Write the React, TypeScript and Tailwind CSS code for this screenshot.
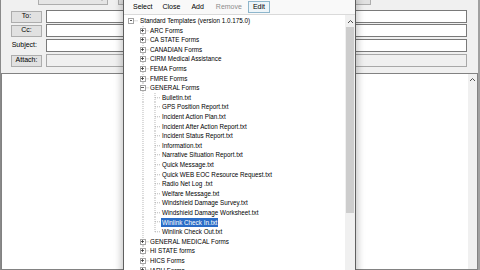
import React from "react";

type Row = {
  level: 0 | 1 | 2;
  text: string;
  box?: "plus" | "minus";
  last?: boolean;
  selected?: boolean;
};

const level1 = (text: string, box: "plus" | "minus" = "plus"): Row => ({ level: 1, text, box });
const leaf = (text: string, extra: Partial<Row> = {}): Row => ({ level: 2, text, ...extra });

const rows: Row[] = [
  { level: 0, text: "Standard Templates (version 1.0.175.0)", box: "minus" },
  level1("ARC Forms"),
  level1("CA STATE Forms"),
  level1("CANADIAN Forms"),
  level1("CIRM Medical Assistance"),
  level1("FEMA Forms"),
  level1("FMRE Forms"),
  level1("GENERAL Forms", "minus"),
  leaf("Bulletin.txt"),
  leaf("GPS Position Report.txt"),
  leaf("Incident Action Plan.txt"),
  leaf("Incident After Action Report.txt"),
  leaf("Incident Status Report.txt"),
  leaf("Information.txt"),
  leaf("Narrative Situation Report.txt"),
  leaf("Quick Message.txt"),
  leaf("Quick WEB EOC Resource Request.txt"),
  leaf("Radio Net Log .txt"),
  leaf("Welfare Message.txt"),
  leaf("Windshield Damage Survey.txt"),
  leaf("Windshield Damage Worksheet.txt"),
  leaf("Winlink Check In.txt", { selected: true }),
  leaf("Winlink Check Out.txt", { last: true }),
  level1("GENERAL MEDICAL Forms"),
  level1("HI STATE forms"),
  level1("HICS Forms"),
  level1("IARU Forms"),
];

const LINE = "#a3a3a3";

function ExpandBox({ cx, kind }: { cx: number; kind: "plus" | "minus" }) {
  return (
    <g shapeRendering="crispEdges">
      <rect x={cx - 2.5} y={2.3} width={5} height={5} fill="#fff" stroke="#8f8f8f" strokeWidth={0.8} />
      <line x1={cx - 1.5} y1={4.8} x2={cx + 1.5} y2={4.8} stroke="#333" strokeWidth={0.8} />
      {kind === "plus" ? <line x1={cx} y1={3.3} x2={cx} y2={6.3} stroke="#333" strokeWidth={0.8} /> : null}
    </g>
  );
}

function TreeLines({ row }: { row: Row }) {
  const width = row.level === 0 ? 15 : row.level === 1 ? 25 : 37;
  return (
    <svg width={width} height={9.6} viewBox={`0 0 ${width} 9.6`} className="shrink-0">
      <g stroke={LINE} strokeWidth={0.8} strokeDasharray="1 1">
        {row.level === 0 ? <line x1={9.5} y1={4.8} x2={14} y2={4.8} /> : null}
        {row.level >= 1 ? <line x1={19} y1={0} x2={19} y2={9.6} /> : null}
        {row.level === 1 ? <line x1={21.5} y1={4.8} x2={25} y2={4.8} /> : null}
        {row.level === 2 ? <line x1={31} y1={0} x2={31} y2={row.last ? 4.8 : 9.6} /> : null}
        {row.level === 2 ? <line x1={31} y1={4.8} x2={37} y2={4.8} /> : null}
      </g>
      {row.box ? <ExpandBox cx={row.level === 0 ? 7 : 19} kind={row.box} /> : null}
    </svg>
  );
}

function TreeRow({ row }: { row: Row }) {
  return (
    <div className="flex h-[9.6px] items-center">
      <TreeLines row={row} />
      <span
        className={`whitespace-nowrap px-[1px] text-[6.3px] leading-[9.4px] ${
          row.selected ? "bg-[#2a6cc6] text-white" : "text-black"
        }`}
      >
        {row.text}
      </span>
    </div>
  );
}

function UpArrow({ className }: { className?: string }) {
  return (
    <svg width="7" height="5" viewBox="0 0 7 5" className={className}>
      <path d="M1 4 L3.5 1.5 L6 4" fill="none" stroke="#505050" strokeWidth="1" />
    </svg>
  );
}

function FieldRow({ label, button = true, disabled = false, className = "" }: { label: string; button?: boolean; disabled?: boolean; className?: string }) {
  return (
    <div className={`flex h-[13px] items-center ${className}`}>
      {button ? (
        <div className="ml-[10px] flex h-[12px] w-[31px] items-center justify-center border border-[#adadad] bg-[#e1e1e1] text-[7px]">
          {label}
        </div>
      ) : (
        <div className="w-[37px] pr-[1px] text-right text-[7px]">{label}</div>
      )}
      <div
        className={`${button ? "ml-[4px]" : "ml-[8px]"} h-full w-[421px] border ${
          disabled ? "border-[#a8a8a8] bg-[#f0f0f0]" : "border-[#7a7a7a] bg-white"
        }`}
      />
    </div>
  );
}

export default function App() {
  return (
    <div className="relative h-[270px] w-[480px] overflow-hidden bg-[#f0f0f0] font-['Liberation_Sans',Arial,sans-serif] text-black">
      <div className="flex h-full flex-col border-l border-r-2 border-l-[#8a8a8a] border-r-[#a0a0a0]">
        {/* From row, mostly scrolled off the top */}
        <div className="-mt-[8px] flex h-[13px] items-center">
          <span className="ml-[17px] w-[20px] text-[7px]">From:</span>
          <div className="flex h-full w-[70px] items-center justify-between border border-[#adadad] bg-[#e5e5e5] px-[2px] text-[7px]">
            <span>VASMCT</span>
            <svg width="6" height="4" viewBox="0 0 6 4">
              <path d="M0.5 0.8 L3 3.2 L5.5 0.8" fill="none" stroke="#404040" strokeWidth="0.9" />
            </svg>
          </div>
          <div className="ml-[10px] h-full w-[6px] border border-[#adadad] bg-[#e1e1e1]" />
          <div className="ml-[201px] flex h-full w-[46px] items-center justify-end border border-[#adadad] bg-[#e1e1e1] pr-[2px] text-[7px]">
            Templates
          </div>
        </div>

        <FieldRow label="To:" className="mt-[5px]" />
        <FieldRow label="Cc:" className="mt-[1px]" />
        <FieldRow label="Subject:" button={false} className="mt-[2px]" />
        <FieldRow label="Attach:" disabled className="mt-[2px]" />

        {/* Message body */}
        <div className="mt-[6px] flex flex-1 border border-[#828282] bg-white">
          <div className="flex-1" />
          <div className="flex w-[9px] flex-col items-center bg-[#f0f0f0] pt-[3px]">
            <UpArrow />
          </div>
        </div>
      </div>

      {/* Template picker popup */}
      <div className="absolute left-[123px] top-0 flex h-[290px] w-[233px] flex-col border-x border-[#5f5f5f] bg-white shadow-[0_0_7px_2px_rgba(0,0,0,0.22)]">
        <div className="flex h-[14px] items-center bg-[#f9f9f9] text-[7px]">
          <span className="ml-[9px]">Select</span>
          <span className="ml-[10px]">Close</span>
          <span className="ml-[11px]">Add</span>
          <span className="ml-[12px] text-[#8d8d8d]">Remove</span>
          <span className="ml-[6px] flex h-[12px] items-center border border-[#8eb6cc] bg-[#eef5f9] px-[4px]">Edit</span>
        </div>
        <div className="flex flex-1 border-t border-[#dadada]">
          <div className="flex-1 pt-[1px]">
            {rows.map((row) => (
              <TreeRow key={row.text} row={row} />
            ))}
          </div>
          <div className="flex w-[10px] flex-col bg-[#f0f0f0]">
            <div className="flex h-[12px] items-center justify-center">
              <UpArrow />
            </div>
            <div className="mx-[1px] h-[186px] bg-[#cdcdcd]" />
          </div>
        </div>
      </div>
    </div>
  );
}
